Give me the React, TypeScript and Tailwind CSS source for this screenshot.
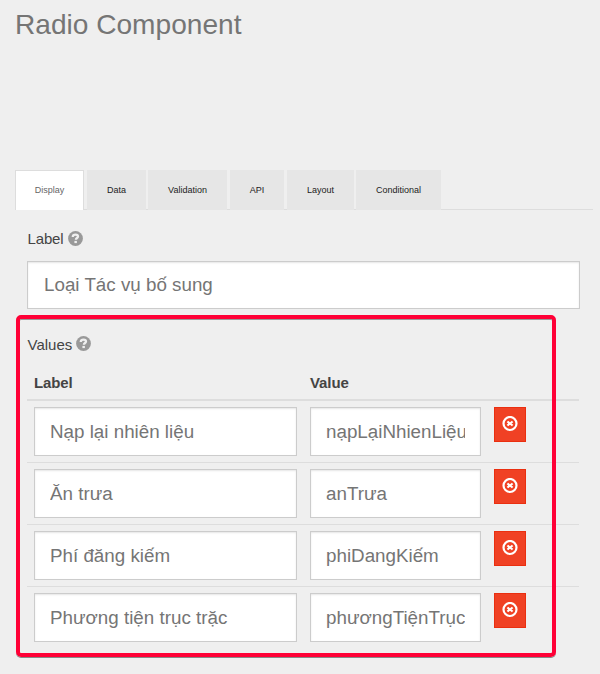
const tabs = [
  { name: 'Data', box: 'ml-[3px] w-[59px]' },
  { name: 'Validation', box: 'ml-[2px] w-[79px]' },
  { name: 'API', box: 'ml-[3px] w-[54px]' },
  { name: 'Layout', box: 'ml-[3px] w-[67px]' },
  { name: 'Conditional', box: 'ml-[2px] w-[85px]' },
];

const rows = [
  ['Nạp lại nhiên liệu', 'nạpLạiNhienLiệu'],
  ['Ăn trưa', 'anTrưa'],
  ['Phí đăng kiếm', 'phiDangKiếm'],
  ['Phương tiện trục trặc', 'phươngTiệnTrụcTrặc'],
];

function HelpIcon() {
  return (
    <svg className="size-[15px] shrink-0" viewBox="0 0 15 15">
      <circle cx="7.5" cy="7.5" r="7.4" fill="#999" />
      <path d="M4.800 6V5.700C4.900 4.200 6 3.600 7.500 3.600c1.500 0 2.500.7 2.500 1.900 0 1.600-2.100 1.500-2.100 3.300" fill="none" stroke="#efefef" strokeWidth="2.300" />
      <path d="M6.400 9.900h2.500v2.200h-2.500z" fill="#efefef" />
    </svg>
  );
}

function RemoveIcon() {
  return (
    <svg className="size-[16px]" viewBox="0 0 16 16" fill="none" stroke="#fff">
      <circle cx="8" cy="7.500" r="6.500" strokeWidth="2.200" />
      <path d="M5.400 5.500l5.200 4M10.600 5.500l-5.200 4" strokeWidth="2.200" />
    </svg>
  );
}

function Field({ value, className }: { value: string; className: string }) {
  return (
    <input
      readOnly
      value={value}
      className={
        'block border border-[#ccc] bg-white pr-[15px] text-[18.800px] text-[#757575] shadow-[inset_0_1px_2px_rgba(0,0,0,0.1)] outline-none ' +
        className
      }
    />
  );
}

export default function App() {
  return (
    <div className="relative h-[674px] w-[600px] overflow-hidden bg-[#efefef] font-['Liberation_Sans',Arial,sans-serif] text-[#444]">
      <h1 className="h-[170px] pl-[15px] pt-[8px] text-[28.100px] leading-[34px] text-[#757575]">Radio Component</h1>
      <div className="ml-[15px] flex h-[40px] w-[578px] text-[9px] text-[#222] shadow-[inset_0_-1px_0_#ddd]">
        <div className="flex w-[69px] items-center justify-center border border-b-0 border-[#ddd] bg-white text-[#666]">Display</div>
        {tabs.map((tab) => (
          <div key={tab.name} className={'flex items-center justify-center bg-[#e6e6e6] pt-px ' + tab.box}>
            {tab.name}
          </div>
        ))}
      </div>
      <div className="ml-[27px] w-[553px]">
        <div className="flex h-[51px] pt-[21px] text-[15px] leading-[17px]">
          <span className="-mt-px w-[41px] pl-[0.500px] tracking-[-0.150px]">Label</span>
          <HelpIcon />
        </div>
        <Field value="Loại Tác vụ bố sung" className="h-[48px] w-[553px] pl-[16px]" />
        <div className="flex h-[57px] pt-[27px] text-[15px] leading-[17px]">
          <span className="w-[49px] pl-[0.500px]">Values</span>
          <HelpIcon />
        </div>
        <div className="flex h-[35px] w-[552px] border-b-2 border-[#ddd] pl-[7px] pt-[8px] text-[15px] font-bold leading-[17px] tracking-[-0.100px]">
          <span className="w-[276px]">Label</span>
          <span>Value</span>
        </div>
        {rows.map(([label, value]) => (
          <div key={label} className="flex h-[62px] w-[552px] items-start border-b border-[#ddd] pl-[7px] pt-[6px] last:border-b-0">
            <Field value={label} className="h-[49px] w-[263px] pl-[15px]" />
            <Field value={value} className="ml-[13px] h-[49px] w-[171px] pl-[15px]" />
            <button className="ml-[13px] flex h-[35px] w-[32px] justify-center border border-[#ea2f10] bg-[#f04124] pt-[8px]">
              <RemoveIcon />
            </button>
          </div>
        ))}
      </div>
      <div className="pointer-events-none absolute left-[16px] top-[315px] h-[342px] w-[540px] rounded-[5px] border-4 border-[#ff0036] shadow-[0_1px_0_#888,inset_0_1px_0_#999]" />
    </div>
  );
}
